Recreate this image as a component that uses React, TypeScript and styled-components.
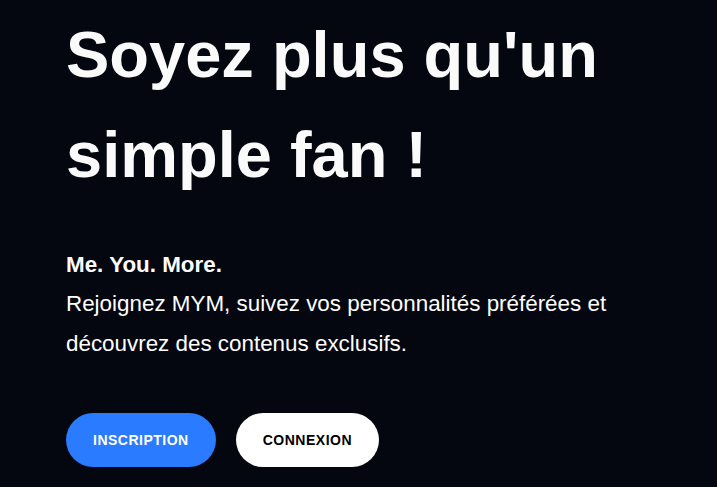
import styled, { createGlobalStyle } from 'styled-components';

const GlobalStyle = createGlobalStyle`
  html, body {
    margin: 0;
    padding: 0;
    background-color: #04070f;
  }
  body {
    font-family: 'Liberation Sans', Arial, sans-serif;
  }
`;

const Hero = styled.section`
  display: flex;
  flex-direction: column;
  align-items: flex-start;
  min-height: 100vh;
  box-sizing: border-box;
  padding: 5px 0 0 66px;
  background-color: #04070f;
  color: #fafafa;
`;

const Title = styled.h1`
  margin: 0;
  font-size: 65px;
  line-height: 100px;
  font-weight: 700;
  color: #fafafa;
`;

const Intro = styled.div`
  margin-top: 40px;
  font-size: 22.4px;
  color: #ffffff;
`;

const Tagline = styled.p`
  margin: 0;
  font-weight: 700;
  line-height: 39px;
`;

const Text = styled.p`
  margin: 0;
  line-height: 40px;
`;

const Actions = styled.div`
  display: flex;
  gap: 20px;
  margin-top: 49px;
`;

const Button = styled.button<{ $primary?: boolean }>`
  height: 54px;
  padding: 0 27px;
  border: none;
  border-radius: 27px;
  font-family: 'Liberation Sans', Arial, sans-serif;
  font-size: 14px;
  font-weight: 700;
  letter-spacing: 0.5px;
  text-transform: uppercase;
  cursor: pointer;
  background-color: ${(p) => (p.$primary ? '#2a7bff' : '#ffffff')};
  color: ${(p) => (p.$primary ? '#ffffff' : '#000000')};
`;

const App = () => {
  return (
    <>
      <GlobalStyle />
      <Hero>
        <Title>
          Soyez plus qu'un
          <br />
          simple fan !
        </Title>
        <Intro>
          <Tagline>Me. You. More.</Tagline>
          <Text>
            Rejoignez MYM, suivez vos personnalités préférées et
            <br />
            découvrez des contenus exclusifs.
          </Text>
        </Intro>
        <Actions>
          <Button $primary>Inscription</Button>
          <Button>Connexion</Button>
        </Actions>
      </Hero>
    </>
  );
};

export default App;
